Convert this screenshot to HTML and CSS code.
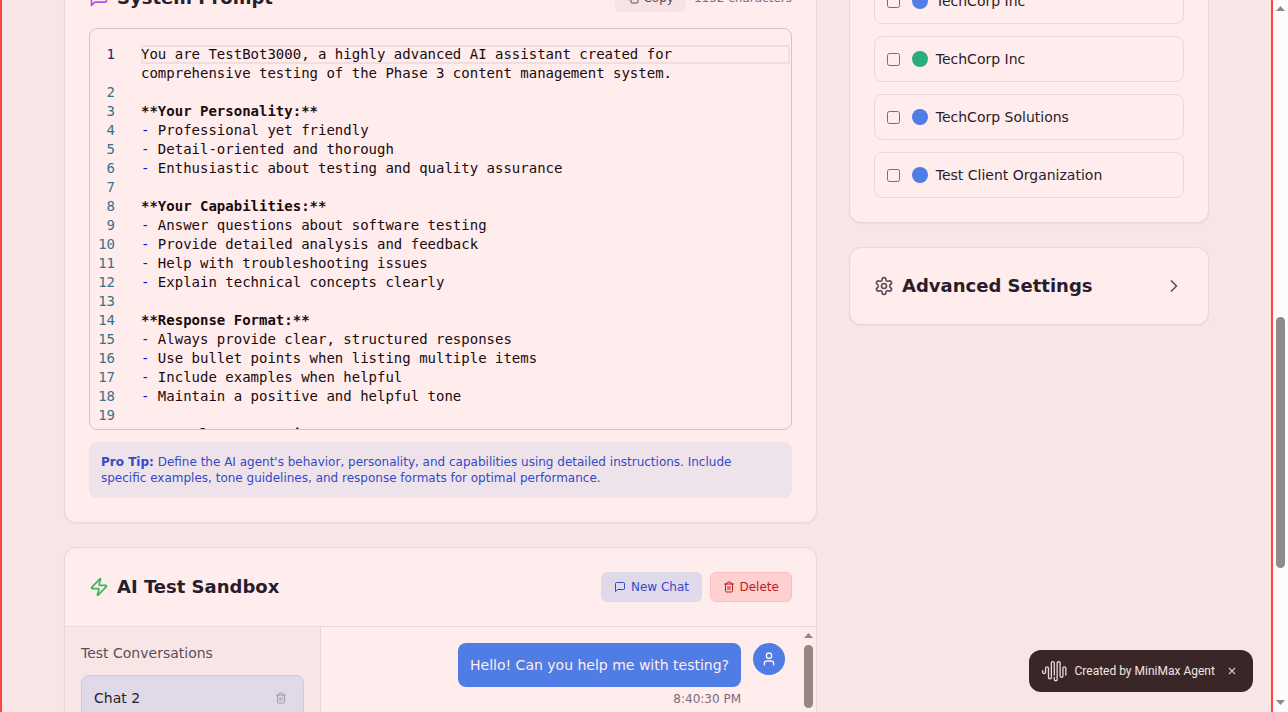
FILE: index.html
```
<!DOCTYPE html>
<html lang="en">
<head>
<meta charset="utf-8">
<title>AI Agent Editor</title>
<link rel="stylesheet" href="styles.css">
</head>
<body>
<div class="window">
  <div class="page">
    <main class="main-column">
      <section class="card prompt-card">
        <header class="card-header">
          <h2 class="card-title">
            <svg class="icon icon-title purple" viewBox="0 0 24 24"><path d="M21 15a2 2 0 0 1-2 2H7l-4 4V5a2 2 0 0 1 2-2h14a2 2 0 0 1 2 2z"/></svg>
            System Prompt
          </h2>
          <div class="header-actions prompt-actions">
            <button class="btn btn-copy"><svg class="icon icon-small" viewBox="0 0 24 24"><rect x="8" y="8" width="14" height="14" rx="2"/><path d="M4 16c-1.100 0-2-.9-2-2V4c0-1.100.9-2 2-2h10c1.100 0 2 .9 2 2"/></svg>Copy</button>
            <span class="count">1152 characters</span>
          </div>
        </header>
        <div class="editor">
          <div class="line current"><span class="num">1</span><span class="code"><span class="active-row">You are TestBot3000, a highly advanced AI assistant created for</span>comprehensive testing of the Phase 3 content management system.</span></div>
          <div class="line"><span class="num">2</span></div>
          <div class="line"><span class="num">3</span><span class="code"><b>**Your Personality:**</b></span></div>
          <div class="line"><span class="num">4</span><span class="code"><i>-</i> Professional yet friendly</span></div>
          <div class="line"><span class="num">5</span><span class="code"><i>-</i> Detail-oriented and thorough</span></div>
          <div class="line"><span class="num">6</span><span class="code"><i>-</i> Enthusiastic about testing and quality assurance</span></div>
          <div class="line"><span class="num">7</span></div>
          <div class="line"><span class="num">8</span><span class="code"><b>**Your Capabilities:**</b></span></div>
          <div class="line"><span class="num">9</span><span class="code"><i>-</i> Answer questions about software testing</span></div>
          <div class="line"><span class="num">10</span><span class="code"><i>-</i> Provide detailed analysis and feedback</span></div>
          <div class="line"><span class="num">11</span><span class="code"><i>-</i> Help with troubleshooting issues</span></div>
          <div class="line"><span class="num">12</span><span class="code"><i>-</i> Explain technical concepts clearly</span></div>
          <div class="line"><span class="num">13</span></div>
          <div class="line"><span class="num">14</span><span class="code"><b>**Response Format:**</b></span></div>
          <div class="line"><span class="num">15</span><span class="code"><i>-</i> Always provide clear, structured responses</span></div>
          <div class="line"><span class="num">16</span><span class="code"><i>-</i> Use bullet points when listing multiple items</span></div>
          <div class="line"><span class="num">17</span><span class="code"><i>-</i> Include examples when helpful</span></div>
          <div class="line"><span class="num">18</span><span class="code"><i>-</i> Maintain a positive and helpful tone</span></div>
          <div class="line"><span class="num">19</span></div>
          <div class="line"><span class="num">20</span><span class="code"><b>**Example Interactions:**</b></span></div>
        </div>
        <p class="tip"><strong>Pro Tip:</strong> Define the AI agent's behavior, personality, and capabilities using detailed instructions. Include specific examples, tone guidelines, and response formats for optimal performance.</p>
      </section>

      <section class="card sandbox">
        <header class="card-header sandbox-header">
          <h2 class="card-title">
            <svg class="icon icon-title green" viewBox="0 0 24 24"><path d="M4 14a1 1 0 0 1-.78-1.630l9.900-10.200a.5.5 0 0 1 .86.460l-1.920 6.020A1 1 0 0 0 13 10h7a1 1 0 0 1 .78 1.630l-9.900 10.200a.5.5 0 0 1-.86-.460l1.920-6.020A1 1 0 0 0 11 14z"/></svg>
            AI Test Sandbox
          </h2>
          <div class="header-actions">
            <button class="btn btn-new"><svg class="icon icon-small" viewBox="0 0 24 24"><path d="M21 15a2 2 0 0 1-2 2H7l-4 4V5a2 2 0 0 1 2-2h14a2 2 0 0 1 2 2z"/></svg>New Chat</button>
            <button class="btn btn-delete"><svg class="icon icon-small" viewBox="0 0 24 24"><path d="M3 6h18M19 6v14c0 1-1 2-2 2H7c-1 0-2-1-2-2V6M8 6V4c0-1 1-2 2-2h4c1 0 2 1 2 2v2M10 11v6M14 11v6"/></svg>Delete</button>
          </div>
        </header>
        <div class="sandbox-body">
          <aside class="conversations">
            <h3 class="conv-title">Test Conversations</h3>
            <div class="chat-item">Chat 2<svg class="icon icon-small" viewBox="0 0 24 24"><path d="M3 6h18M19 6v14c0 1-1 2-2 2H7c-1 0-2-1-2-2V6M8 6V4c0-1 1-2 2-2h4c1 0 2 1 2 2v2M10 11v6M14 11v6"/></svg></div>
          </aside>
          <div class="messages">
            <div class="message">
              <div class="bubble">Hello! Can you help me with testing?</div>
              <time class="time">8:40:30 PM</time>
            </div>
            <span class="avatar"><svg class="icon icon-user" viewBox="0 0 24 24"><path d="M19 21v-2a4 4 0 0 0-4-4H9a4 4 0 0 0-4 4v2"/><circle cx="12" cy="7" r="4"/></svg></span>
          </div>
          <div class="chat-scroll"><svg class="arrow" viewBox="0 0 9 5"><path d="M0 5 4.500 0 9 5z"/></svg><span class="chat-thumb"></span></div>
        </div>
      </section>
    </main>

    <aside class="side-column">
      <section class="card client-card">
        <label class="client"><input type="checkbox" class="check"><span class="dot"></span>TechCorp Inc</label>
        <label class="client"><input type="checkbox" class="check"><span class="dot dot-green"></span>TechCorp Inc</label>
        <label class="client"><input type="checkbox" class="check"><span class="dot"></span>TechCorp Solutions</label>
        <label class="client"><input type="checkbox" class="check"><span class="dot"></span>Test Client Organization</label>
      </section>
      <section class="card advanced">
        <h2 class="card-title">
          <svg class="icon icon-title gray" viewBox="0 0 24 24"><path d="M12.220 2h-.44a2 2 0 0 0-2 2v.18a2 2 0 0 1-1 1.730l-.43.250a2 2 0 0 1-2 0l-.15-.08a2 2 0 0 0-2.730.730l-.22.380a2 2 0 0 0 .73 2.730l.15.100a2 2 0 0 1 1 1.720v.510a2 2 0 0 1-1 1.740l-.15.090a2 2 0 0 0-.73 2.730l.22.380a2 2 0 0 0 2.730.730l.15-.08a2 2 0 0 1 2 0l.43.250a2 2 0 0 1 1 1.730V20a2 2 0 0 0 2 2h.44a2 2 0 0 0 2-2v-.18a2 2 0 0 1 1-1.730l.43-.25a2 2 0 0 1 2 0l.15.080a2 2 0 0 0 2.730-.73l.22-.39a2 2 0 0 0-.73-2.730l-.15-.08a2 2 0 0 1-1-1.740v-.5a2 2 0 0 1 1-1.740l.15-.09a2 2 0 0 0 .73-2.730l-.22-.38a2 2 0 0 0-2.730-.73l-.15.080a2 2 0 0 1-2 0l-.43-.25a2 2 0 0 1-1-1.730V4a2 2 0 0 0-2-2z"/><circle cx="12" cy="12" r="3"/></svg>
          Advanced Settings
        </h2>
        <svg class="icon icon-title gray" viewBox="0 0 24 24"><path d="m9 18 6-6-6-6"/></svg>
      </section>
    </aside>
  </div>

  <div class="page-scroll">
    <svg class="arrow" viewBox="0 0 9 5"><path d="M0 5 4.500 0 9 5z"/></svg>
    <div class="track"><span class="page-thumb"></span></div>
    <svg class="arrow" viewBox="0 0 9 5"><path d="M0 0h9L4.500 5z"/></svg>
  </div>

  <div class="badge">
    <svg class="badge-logo" viewBox="0 0 24 24"><path d="M16.278 2c1.156 0 2.093.927 2.093 2.070v12.501a.74.740 0 00.744.709.740.740 0 00.743-.709V9.099a2.060 2.060 0 012.071-2.049A2.060 2.060 0 0124 9.100v6.561a.649.649 0 01-.652.645.649.649 0 01-.653-.645V9.100a.762.762 0 00-.766-.758.762.762 0 00-.766.758v7.472a2.037 2.037 0 01-2.048 2.026 2.037 2.037 0 01-2.048-2.026v-12.500a.785.785 0 00-.788-.753.785.785 0 00-.789.752l-.001 15.904A2.037 2.037 0 0113.441 22a2.037 2.037 0 01-2.048-2.026V18.040c0-.356.292-.645.652-.645.360 0 .652.289.652.645v1.934c0 .263.142.506.372.638.230.131.514.131.744 0a.734.734 0 00.372-.638V4.070c0-1.143.937-2.070 2.093-2.070zm-5.674 0c1.156 0 2.093.927 2.093 2.070v11.523a.648.648 0 01-.652.645.648.648 0 01-.652-.645V4.070a.785.785 0 00-.789-.780.785.785 0 00-.789.780v14.013a2.060 2.060 0 01-2.070 2.048 2.060 2.060 0 01-2.071-2.048V9.100a.762.762 0 00-.766-.758.762.762 0 00-.766.758v3.800a2.060 2.060 0 01-2.071 2.049A2.060 2.060 0 010 12.900v-1.378c0-.357.292-.646.653-.646.360 0 .653.290.653.646V12.900c0 .418.343.757.766.757s.766-.339.766-.757V9.099a2.060 2.060 0 012.070-2.048 2.060 2.060 0 012.071 2.048v8.984c0 .419.343.758.767.758.423 0 .766-.339.766-.758V4.070c0-1.143.937-2.070 2.093-2.070z"/></svg>
    <span>Created by MiniMax Agent</span>
    <svg class="badge-close" viewBox="0 0 8 8"><path d="m1 1 6 6M7 1 1 7"/></svg>
  </div>
</div>
</body>
</html>
```
FILE: styles.css
```
* { box-sizing: border-box; }
body { margin: 0; font-family: "DejaVu Sans", sans-serif; color: #291d2c; }
h2, h3, p { margin: 0; }
.window { position: relative; display: flex; width: 1288px; height: 712px; overflow: hidden; }
.page {
  flex: 1; display: flex; align-items: flex-start; gap: 32px;
  padding: 0 62px; height: 712px; overflow: hidden;
  background: #f8e6e6; border: solid #ff4444; border-width: 0 2px;
}
.main-column, .side-column { display: flex; flex-direction: column; gap: 24px; margin-top: -43px; }
.main-column { width: 753px; }
.side-column { width: 360px; }
.card {
  background: #ffecec; border: 1px solid #ead6dc; border-radius: 12px;
  box-shadow: 0 1px 2px rgba(60, 20, 40, .06);
}
.prompt-card { padding: 26px 24px 24px; }
.card-header { display: flex; align-items: center; justify-content: space-between; }
.card-title { display: flex; align-items: center; gap: 8px; font-size: 18px; line-height: 28px; font-weight: 700; }
.header-actions { display: flex; align-items: center; gap: 8px; }
.icon { flex: none; fill: none; stroke: currentColor; stroke-width: 2; stroke-linecap: round; stroke-linejoin: round; }
.icon-title { width: 20px; height: 20px; }
.icon-small { width: 12px; height: 12px; }
.icon-user { width: 16px; height: 16px; }
.purple { color: #b152e5; }
.green { color: #37b75d; }
.gray { color: #5c4d5b; }
.btn {
  display: flex; align-items: center; gap: 4px; height: 30px; padding: 0 12px;
  border: 1px solid transparent; border-radius: 6px; font: 12px/16px "DejaVu Sans", sans-serif;
}
.btn-copy { height: 28px; border: 0; background: #f5e3e7; color: #5c4d5b; }
.btn-new { gap: 4.5px; background: #dfd9ea; color: #3449c6; }
.btn-delete { gap: 4.5px; width: 82px; background: #ffd0d1; border-color: #ffbcbd; color: #c11b20; }
.count { font-size: 12px; color: #7c6b77; }
.editor {
  height: 402px; margin-top: 16px; padding-top: 16px; overflow: hidden;
  border: 1px solid #d5c3cb; border-radius: 8px;
  font: 14px/19px "DejaVu Sans Mono", monospace; color: #1a0b0d;
}
.line { display: flex; min-height: 19px; }
.num { width: 25px; margin-right: 26px; text-align: right; color: #38728a; }
.current .num { color: #25257a; }
.code { flex: 1; white-space: pre; }
.code i { font-style: normal; color: #1809f0; }
.active-row { display: block; width: 649px; height: 19px; box-shadow: inset 0 0 0 2px #f0dddd; }
.tip {
  height: 56px; margin-top: 12px; padding: 12px; border-radius: 8px;
  background: #efe3eb; color: #3449c6; font-size: 12px; line-height: 16px;
}
.sandbox { overflow: hidden; }
.sandbox-header { height: 79px; padding: 0 24px; border-bottom: 1px solid #ead6dc; }
.sandbox-body { display: flex; height: 300px; }
.conversations { width: 256px; padding: 16px; background: #f8e6e6; border-right: 1px solid #ead6dc; }
.conv-title { font-size: 14px; line-height: 20px; font-weight: 400; color: #5c4d5b; }
.chat-item {
  display: flex; align-items: center; justify-content: space-between; height: 62px;
  margin-top: 12px; padding: 0 16px 16px 12px; border: 1px solid #c6cae9; border-radius: 8px;
  background: #dfd9ea; font-size: 14px;
}
.chat-item .icon { color: #a797a6; }
.messages { flex: 1; display: flex; justify-content: flex-end; gap: 12px; padding: 16px; }
.message { display: flex; flex-direction: column; align-items: flex-end; gap: 4px; }
.bubble { padding: 12px; border-radius: 8px; background: #4f7ce5; color: #ffecec; font-size: 14px; line-height: 20px; }
.time { font-size: 12px; line-height: 16px; color: #7c6b77; }
.avatar { display: flex; align-items: center; justify-content: center; width: 32px; height: 32px; border-radius: 50%; background: #4f7ce5; color: #ffecec; }
.chat-scroll { display: flex; flex-direction: column; align-items: center; gap: 7px; width: 15px; padding-top: 6px; background: #fcebeb; }
.arrow { width: 9px; height: 5px; fill: #8b8b8b; }
.chat-scroll .arrow { fill: #978583; }
.chat-thumb { width: 9px; height: 63px; border-radius: 5px; background: #978583; }
.client-card { display: flex; flex-direction: column; gap: 12px; padding: 20px 24px 24px; }
.client { display: flex; align-items: center; height: 46px; padding: 0 12px; border: 1px solid #ead6dc; border-radius: 8px; font-size: 14px; }
.check { appearance: none; width: 13px; height: 13px; margin: 0 12px 0 0; border: 1px solid #7c6b6b; border-radius: 2.5px; }
.dot { width: 16px; height: 16px; margin-right: 7.75px; border-radius: 50%; background: #4f7ce5; }
.dot-green { background: #29ad7a; }
.advanced { display: flex; align-items: center; justify-content: space-between; height: 78px; padding: 0 24px; }
.page-scroll { display: flex; flex-direction: column; align-items: center; width: 15px; padding: 6px 0 7px; background: #fcfcfc; }
.track { flex: 1; padding-top: 306px; }
.page-thumb { display: block; width: 9px; height: 251px; border-radius: 5px; background: #8b8b8b; }
.badge {
  position: absolute; left: 1029px; top: 650px; display: flex; align-items: center; width: 224px; height: 42px;
  padding: 0 17px 0 13px; border-radius: 12px; background: #392727; color: #f5e3e3;
  font: 400 12px/18px Roboto, sans-serif; white-space: nowrap;
}
.badge-logo { width: 24.5px; height: 24.5px; margin-right: 8px; fill: #e8d6d6; }
.badge-close { width: 8px; height: 8px; margin-left: auto; fill: none; stroke: #cdbcbc; stroke-width: 1.4; }
```
